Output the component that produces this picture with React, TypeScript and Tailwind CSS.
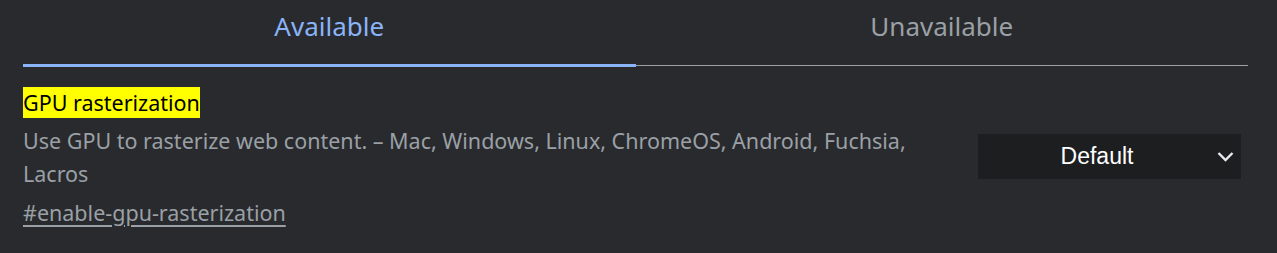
export default function App() {
  return (
    <div className="min-h-[253px] w-full bg-[#292a2d] pl-[23px] pr-[29px] [font-family:'Noto_Sans',sans-serif]">
      <div className="flex">
        <div className="flex h-[67px] flex-1 flex-col">
          <div className="flex flex-1 items-center justify-center pb-[12px] text-[26px] text-[#8ab4f8]">
            Available
          </div>
          <div className="h-[3px] bg-[#8ab4f8]" />
        </div>
        <div className="flex h-[67px] flex-1 flex-col">
          <div className="flex flex-1 items-center justify-center pb-[12px] text-[26px] text-[#9aa0a6]">
            Unavailable
          </div>
          <div className="mb-px h-px bg-[#9aa0a6]" />
        </div>
      </div>

      <div className="flex items-center justify-between pt-[20px]">
        <div className="w-[910px]">
          <h2 className="inline-block bg-[#ffff00] text-[21.5px] leading-[31px] text-black">
            GPU rasterization
          </h2>
          <p className="mt-[6px] text-[21.5px] leading-[33px] text-[#9aa0a6]">
            Use GPU to rasterize web content. – Mac, Windows, Linux, ChromeOS, Android, Fuchsia, Lacros
          </p>
          <a className="mt-[10px] block text-[21.5px] leading-[26px] text-[#9aa0a6] underline underline-offset-[4px]">
            #enable-gpu-rasterization
          </a>
        </div>
        <div className="relative mr-[7px] flex h-[45px] w-[263px] items-center justify-center bg-[#1d1e20] [font-family:'Liberation_Sans',Arial,sans-serif] text-[23px] text-white">
          <span className="pr-[25px]">Default</span>
          <svg
            className="absolute right-[7px] top-[17px] h-[11px] w-[17px]"
            viewBox="0 0 17 11"
            fill="none"
            stroke="#e8eaed"
            strokeWidth={2.4}
          >
            <path d="M1.5 2l7 7 7-7" />
          </svg>
        </div>
      </div>
    </div>
  );
}
